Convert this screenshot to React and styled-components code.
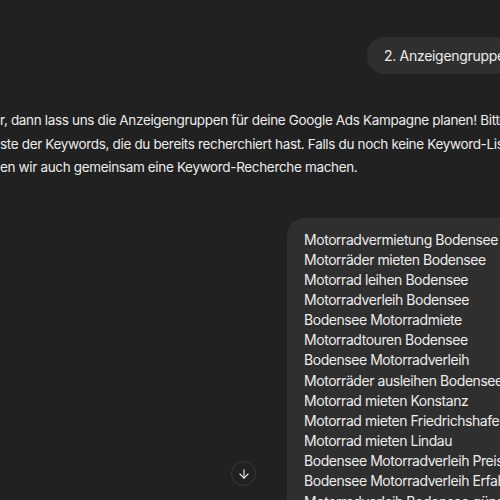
import React from "react";
import styled, { createGlobalStyle } from "styled-components";
import { ArrowDown } from "lucide-react";

const GlobalStyle = createGlobalStyle`
  html, body {
    margin: 0;
    padding: 0;
    background: #212121;
  }
  body {
    font-family: Inter, "Noto Sans", "Liberation Sans", sans-serif;
    color: #ececec;
    -webkit-font-smoothing: antialiased;
  }
`;

const Page = styled.div`
  position: relative;
  width: 500px;
  height: 500px;
  overflow: hidden;
  background: #212121;
`;

const Thread = styled.div`
  display: flex;
  flex-direction: column;
  padding-top: 37px;
`;

const UserRow = styled.div`
  display: flex;
  padding-left: ${(p) => p.$indent}px;
  margin-top: ${(p) => p.$top || 0}px;
`;

const Bubble = styled.div`
  background: #2f2f2f;
  border-radius: 18px 0 0 18px;
  padding: ${(p) => (p.$list ? "12px 0 9px 17px" : "0 0 0 17px")};
  flex: 1;
  font-size: 14px;
  letter-spacing: ${(p) => (p.$list ? "-0.45px" : "-0.3px")};
  line-height: ${(p) => (p.$list ? "20.15px" : "37px")};
  white-space: nowrap;
  overflow: hidden;
`;

const Line = styled.div`
  white-space: nowrap;
`;

const Answer = styled.div`
  margin-top: 35px;
  font-size: 13.5px;
  letter-spacing: -0.34px;
  line-height: 23.5px;
  white-space: nowrap;
  overflow: hidden;
`;

const ScrollButton = styled.button`
  position: absolute;
  left: 231px;
  top: 461px;
  width: 25px;
  height: 25px;
  border-radius: 50%;
  border: 1px solid #3a3a3a;
  background: #212121;
  color: #e6e6e6;
  display: flex;
  align-items: center;
  justify-content: center;
  padding: 0;
`;

const answerLines = [
  "r, dann lass uns die Anzeigengruppen für deine Google Ads Kampagne planen! Bitte",
  "ste der Keywords, die du bereits recherchiert hast. Falls du noch keine Keyword-Liste",
  "en wir auch gemeinsam eine Keyword-Recherche machen.",
];

const keywords = [
  "Motorradvermietung Bodensee",
  "Motorräder mieten Bodensee",
  "Motorrad leihen Bodensee",
  "Motorradverleih Bodensee",
  "Bodensee Motorradmiete",
  "Motorradtouren Bodensee",
  "Bodensee Motorradverleih",
  "Motorräder ausleihen Bodensee",
  "Motorrad mieten Konstanz",
  "Motorrad mieten Friedrichshafen",
  "Motorrad mieten Lindau",
  "Bodensee Motorradverleih Preise",
  "Bodensee Motorradverleih Erfahrungen",
  "Motorradverleih Bodensee günstig",
];

export default function App() {
  return (
    <>
      <GlobalStyle />
      <Page>
        <Thread>
          <UserRow $indent={367}>
            <Bubble>2. Anzeigengruppen</Bubble>
          </UserRow>
          <Answer>
            {answerLines.map((l) => (
              <Line key={l}>{l}</Line>
            ))}
          </Answer>
          <UserRow $indent={287} $top={38}>
            <Bubble $list>
              {keywords.map((k) => (
                <Line key={k}>{k}</Line>
              ))}
            </Bubble>
          </UserRow>
        </Thread>
        <ScrollButton aria-label="Nach unten scrollen">
          <ArrowDown size={14} strokeWidth={2} />
        </ScrollButton>
      </Page>
    </>
  );
}
